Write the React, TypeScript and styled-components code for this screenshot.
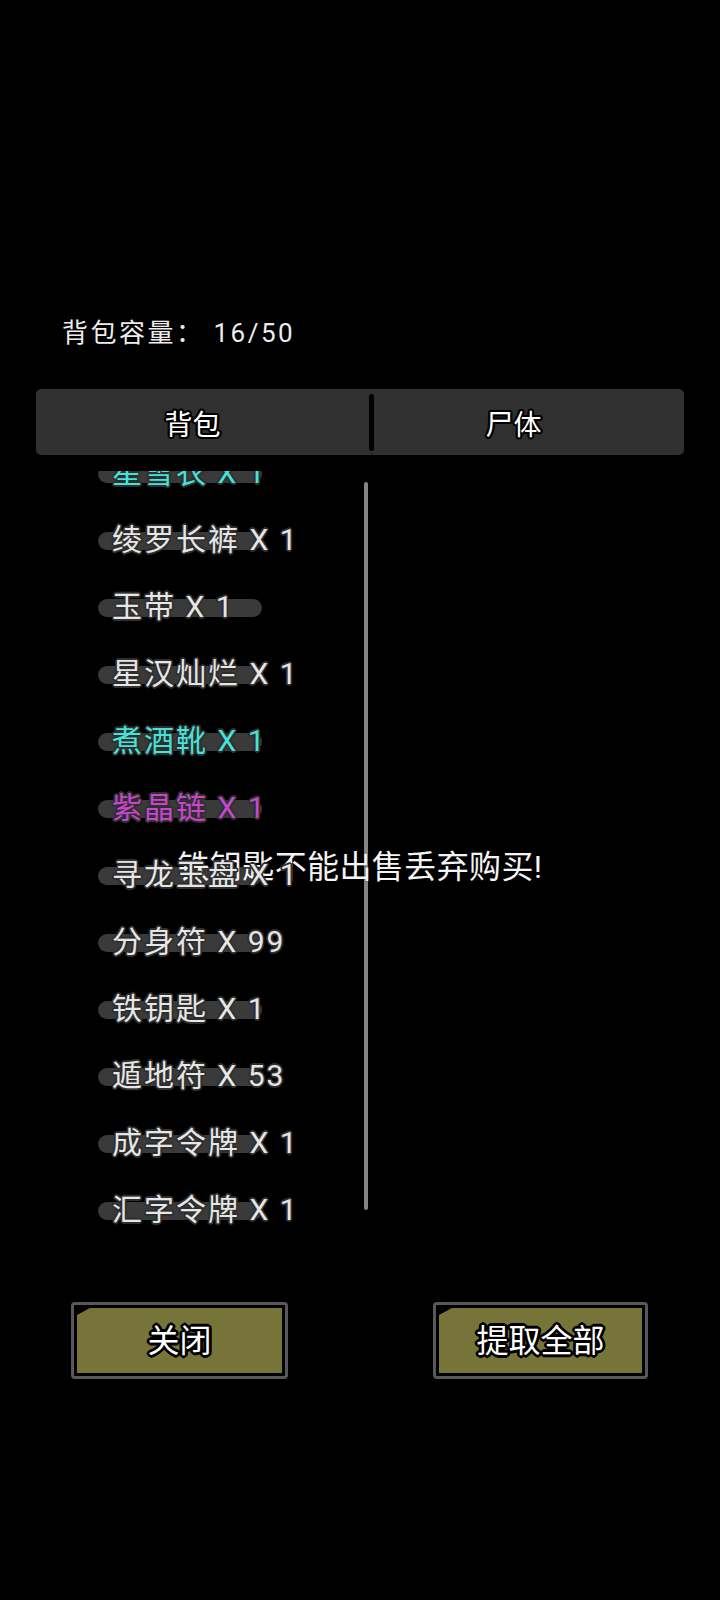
import styled, { createGlobalStyle } from 'styled-components'

const GlobalStyle = createGlobalStyle`
  html, body {
    margin: 0;
    padding: 0;
    background: #000;
  }
  body {
    font-family: Roboto, "Noto Sans CJK SC", sans-serif;
  }
`

const outline = (w: number, c: string) => {
  const out: string[] = []
  for (let a = 0; a < 360; a += 30) {
    const r = (a * Math.PI) / 180
    out.push(`${(Math.cos(r) * w).toFixed(2)}px ${(Math.sin(r) * w).toFixed(2)}px 0 ${c}`)
  }
  return out.join(', ')
}

const Page = styled.div`
  position: relative;
  width: 720px;
  min-height: 1600px;
  background: #000;
  overflow: hidden;
`

const Capacity = styled.div`
  padding: 318px 0 0 62px;
  height: 31px;
  line-height: 31px;
  font-size: 26px;
  letter-spacing: 2.5px;
  color: #ececec;
  white-space: pre;
`

const TabBar = styled.div`
  margin: 40px 36px 0;
  height: 66px;
  display: grid;
  grid-template-columns: 333px 5px 1fr;
  align-items: center;
  background: #303030;
  border-radius: 5px;
`

const Tab = styled.div<{ $pr: number }>`
  text-align: center;
  padding: 7px ${p => p.$pr}px 0 0;
  font-size: 28px;
  line-height: 34px;
  color: #fff;
  text-shadow: ${outline(2.2, '#000')};
`

const TabDivider = styled.div`
  height: 57px;
  background: #000;
  border-radius: 3px;
`

const ListView = styled.div`
  position: relative;
  margin-top: 16px;
  height: 770px;
  overflow: hidden;
`

const ListInner = styled.div`
  margin-top: -32px;
`

const Row = styled.div<{ $color: string }>`
  position: relative;
  height: 67px;
  display: flex;
  align-items: center;
  padding-left: 112px;
  font-size: 30px;
  letter-spacing: 2px;
  color: ${p => p.$color};
  white-space: pre;

  &::before {
    content: '';
    position: absolute;
    left: 98px;
    top: 50%;
    width: 164px;
    height: 18px;
    margin-top: -8px;
    border-radius: 9px;
    background: #3a3a3a;
  }
`

const RowText = styled.span`
  position: relative;
  z-index: 1;
  line-height: 36px;
  text-shadow: ${outline(1.6, '#2e2e2e')}, 0 0 3px #3a3a3a;
`

const ScrollBar = styled.div`
  position: absolute;
  left: 364px;
  top: 11px;
  width: 4px;
  height: 728px;
  border-radius: 2px;
  background: #858585;
`

const Toast = styled.div`
  position: absolute;
  left: 0;
  right: 0;
  top: 848px;
  text-align: center;
  font-size: 32px;
  line-height: 38px;
  letter-spacing: 0.4px;
  color: #f4f4f4;
  text-shadow: 0 0 2px rgba(0, 0, 0, 0.6);
`

const ButtonRow = styled.div`
  margin-top: 61px;
  padding: 0 72px 0 71px;
  display: flex;
  justify-content: space-between;
`

const Button = styled.div<{ $w: number }>`
  width: ${p => p.$w}px;
  height: 77px;
  box-sizing: border-box;
  border: 3px solid #585858;
  border-radius: 4px;
  background: #000;
  padding: 3px;
  display: flex;
`

const ButtonFace = styled.div`
  flex: 1;
  display: flex;
  align-items: center;
  justify-content: center;
  background: #77743a;
  clip-path: polygon(0 7px, 13px 0, 100% 0, 100% 100%, 0 100%);
  font-size: 32px;
  line-height: 38px;
  color: #fff;
  text-shadow: ${outline(2.8, '#000')};
`

interface IItem {
  name: string
  count: number
  color: string
}

const WHITE = '#e6e6e6'
const CYAN = '#45e2da'
const PURPLE = '#c646cc'

const items: IItem[] = [
  { name: '星雪衣', count: 1, color: CYAN },
  { name: '绫罗长裤', count: 1, color: WHITE },
  { name: '玉带', count: 1, color: WHITE },
  { name: '星汉灿烂', count: 1, color: WHITE },
  { name: '煮酒靴', count: 1, color: CYAN },
  { name: '紫晶链', count: 1, color: PURPLE },
  { name: '寻龙玉盘', count: 1, color: WHITE },
  { name: '分身符', count: 99, color: WHITE },
  { name: '铁钥匙', count: 1, color: WHITE },
  { name: '遁地符', count: 53, color: WHITE },
  { name: '成字令牌', count: 1, color: WHITE },
  { name: '汇字令牌', count: 1, color: WHITE },
]

const App = () => {
  return (
    <Page>
      <GlobalStyle />
      <Capacity>背包容量： 16/50</Capacity>
      <TabBar>
        <Tab $pr={20}>背包</Tab>
        <TabDivider />
        <Tab $pr={31}>尸体</Tab>
      </TabBar>
      <ListView>
        <ListInner>
          {items.map(item => (
            <Row key={item.name} $color={item.color}>
              <RowText>{`${item.name} X ${item.count}`}</RowText>
            </Row>
          ))}
        </ListInner>
        <ScrollBar />
      </ListView>
      <ButtonRow>
        <Button $w={217}>
          <ButtonFace>关闭</ButtonFace>
        </Button>
        <Button $w={215}>
          <ButtonFace>提取全部</ButtonFace>
        </Button>
      </ButtonRow>
      <Toast>铁钥匙不能出售丢弃购买!</Toast>
    </Page>
  )
}

export default App
